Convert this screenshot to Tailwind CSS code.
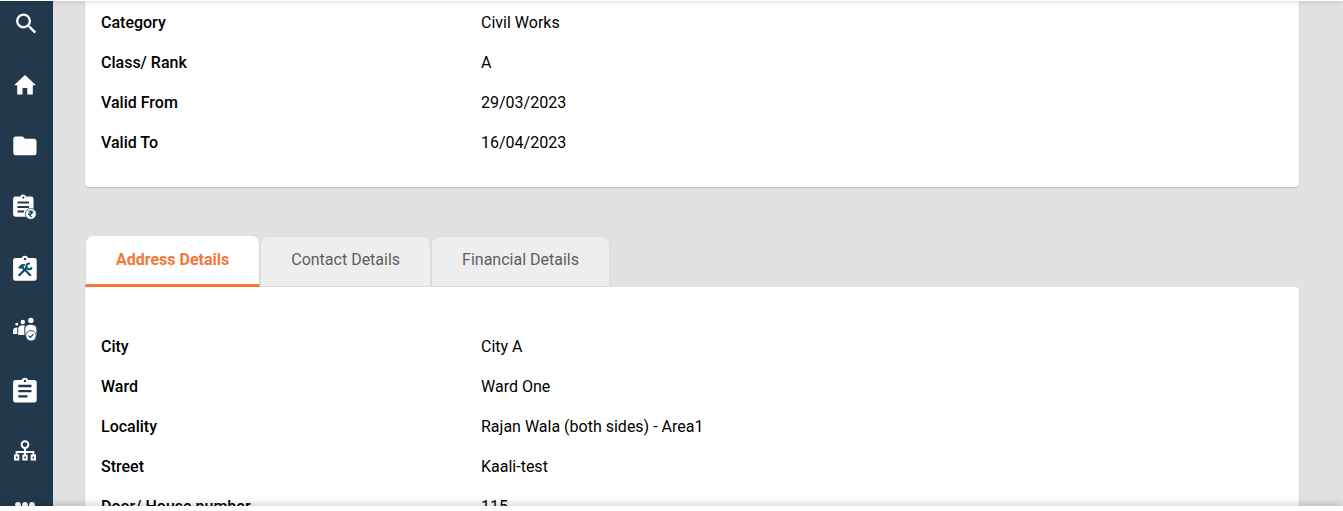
<!DOCTYPE html>
<html lang="en">
<head>
<meta charset="utf-8">
<meta name="viewport" content="width=device-width, initial-scale=1">
<title>Organisation Details</title>
<script src="https://cdn.jsdelivr.net/npm/@tailwindcss/browser@4"></script>
</head>
<body class="flex h-screen flex-col overflow-hidden bg-white font-[Roboto,sans-serif] text-base text-black">
<header class="relative z-10 h-px shrink-0 bg-white shadow-[0_0_5px_rgba(0,0,0,0.5)]"></header>

<div class="flex min-h-0 flex-1 overflow-hidden bg-[#e2e2e2]">
  <nav aria-label="Modules" class="w-[53px] shrink-0 overflow-hidden bg-[#22394d] text-white">
    <ul class="-mt-2">
      <li><a href="#" aria-label="Search" class="flex h-[61px] items-center pl-[13px]">
        <svg class="size-6" viewBox="0 0 24 24" fill="currentColor"><path transform="translate(-.4 -2) scale(1.15)" d="M15.5 14h-.79l-.28-.27A6.47 6.47 0 0 0 16 9.5 6.5 6.5 0 1 0 9.500 16c1.610 0 3.090-.59 4.230-1.570l.27.28v.79l5 4.990L20.490 19l-4.990-5zm-6 0A4.500 4.500 0 1 1 14 9.500 4.490 4.490 0 0 1 9.500 14z"/></svg></a></li>
      <li><a href="#" aria-label="Home" class="flex h-[61px] items-center pl-[13px]">
        <svg class="size-6" viewBox="0 0 24 24" fill="currentColor"><path d="M9.500 21.500V15h4.800v6.500h5.500v-9.200H23L12 2 1 12.300h3.200v9.200z"/></svg></a></li>
      <li><a href="#" aria-label="Projects" class="flex h-[61px] items-center pl-[13px]">
        <svg class="size-6" viewBox="0 0 24 24" fill="currentColor"><path d="M9.600 2.500H2.500A2.400 2.400 0 0 0 .3 4.900v14A2.400 2.400 0 0 0 2.500 21.300h18.800a2.400 2.400 0 0 0 2.200-2.400V7.200a2.400 2.400 0 0 0-2.200-2.400H12z"/></svg></a></li>
      <li><a href="#" aria-label="Estimates" class="flex h-[61px] items-center pl-[13px]">
        <svg class="h-[26px] w-6" viewBox="0 0 24 26"><path fill="currentColor" d="M2.300 2.600H7.200a3.100 3.100 0 0 1 5.800 0h5.300A2.300 2.300 0 0 1 20.500 4.800V20.600a2.300 2.300 0 0 1-2.200 2.200H2.300A2.300 2.300 0 0 1 .1 20.600V4.800A2.300 2.300 0 0 1 2.300 2.600z"/><circle cx="10.300" cy="3.600" r="1.100" fill="#22394d"/><path d="M4.500 8.500h11.500M4.500 13h11.500M4.500 17.500h6.500" stroke="#22394d" stroke-width="2"/><circle cx="17.800" cy="19.800" r="5.500" fill="#fff" stroke="#22394d" stroke-width=".7"/><path d="M15.400 17h5M15.400 18.900h5M16 17c3.600 0 3.600 3.500 0 3.500l2.700 2.700" fill="none" stroke="#0b4b66" stroke-width="1.100"/></svg></a></li>
      <li><a href="#" aria-label="Works" class="flex h-[61px] items-center pl-[13px]">
        <svg class="h-[26px] w-6" viewBox="0 0 24 26"><path fill="currentColor" d="M2.400 3H8.600a3.500 3.500 0 0 1 6.600 0h6.200A2.300 2.300 0 0 1 23.700 5.200v18.300a2.300 2.300 0 0 1-2.300 2.200h-19A2.300 2.300 0 0 1 .1 23.500V5.200A2.300 2.300 0 0 1 2.400 3z"/><circle cx="12" cy="4" r="1.200" fill="#22394d"/><g stroke="#0b4b66" fill="none"><path d="M9 12l8.800 8.800" stroke-width="2.200"/><path d="M5.700 20.800l8.500-8.500" stroke-width="2.200"/><path d="M5.500 12.800l3.200-3.200h3.200L8.300 13.200z" fill="#0b4b66" stroke-width="1"/><path d="M16.800 8.700a2.800 2.800 0 1 0 2 3.600" stroke-width="2"/></g></svg></a></li>
      <li><a href="#" aria-label="Community organisations" class="flex h-[61px] items-center pl-[13px]">
        <svg class="h-[26px] w-6" viewBox="0 0 24 26" fill="currentColor"><circle cx="3.800" cy="8.200" r="1.400"/><circle cx="9.800" cy="6" r="2.200"/><circle cx="17.900" cy="4.400" r="2.700"/><path d="M0 18v-3.300c0-2.200 1.500-3.200 4.300-3.200V18zM5.200 19v-6c0-2.500 1.600-3.700 4.600-3.700 1 0 1.700.2 2.300.5-.6 1-.8 1.700-.8 3V19z"/><path d="M12.300 19.500v-6.700c0-2.800 2-4.100 5.500-4.100s5.600 1.300 5.600 4.100v6.700z"/><circle cx="18" cy="19.800" r="5.200" stroke="#22394d" stroke-width=".8"/><path d="M15.500 19.700l1.800 1.800 3.200-3.300" fill="none" stroke="#22394d" stroke-width="1.200"/></svg></a></li>
      <li><a href="#" aria-label="Contracts" class="flex h-[61px] items-center pl-[13px]">
        <svg class="h-[26px] w-6" viewBox="0 0 24 26"><path fill="currentColor" d="M2.500 3H8.600a3.500 3.500 0 0 1 6.600 0h6.100A2.400 2.400 0 0 1 23.700 5.300v18a2.400 2.400 0 0 1-2.400 2.300H2.500A2.400 2.400 0 0 1 .1 23.300v-18A2.400 2.400 0 0 1 2.500 3z"/><circle cx="12" cy="4" r="1.200" fill="#22394d"/><path d="M5.300 9h13.200M5.300 14.200h13.200M5.300 19.300h9.200" stroke="#22394d" stroke-width="2.300"/></svg></a></li>
      <li><a href="#" aria-label="Organisations" class="flex h-[61px] items-center pl-[13px]">
        <svg class="size-6" viewBox="0 0 24 24" fill="none" stroke="currentColor" stroke-width="1.900"><circle cx="12" cy="5.600" r="3.400"/><path d="M12 9v8M3.600 17v-4h16.800v4"/><path d="M2 16.500h3.400v4H2zM10.300 16.500h3.400v4h-3.400zM18.600 16.500H22v4h-3.400z"/></svg></a></li>
      <li><a href="#" aria-label="Groups" class="flex h-[61px] items-center pl-[13px]">
        <svg class="size-6" viewBox="0 0 24 24" fill="currentColor"><circle cx="5" cy="5" r="2.900"/><circle cx="12" cy="5" r="2.900"/><circle cx="19" cy="5" r="2.900"/><path d="M1 20v-7c0-4 22-4 22 0v7z"/></svg></a></li>
    </ul>
  </nav>

  <main class="min-w-0 flex-1 overflow-hidden pr-11 pl-8">
    <section aria-label="Organisation" class="rounded-b bg-white px-4 pt-[10px] pb-4 shadow-[0_1px_2px_rgba(0,0,0,0.16)]">
      <dl class="grid grid-cols-[380px_1fr]">
        <dt class="mb-4 font-medium">Category</dt><dd class="mb-4">Civil Works</dd>
        <dt class="mb-4 font-medium">Class/ Rank</dt><dd class="mb-4">A</dd>
        <dt class="mb-4 font-medium">Valid From</dt><dd class="mb-4">29/03/2023</dd>
        <dt class="mb-4 font-medium">Valid To</dt><dd class="mb-4">16/04/2023</dd>
      </dl>
    </section>

    <div role="tablist" class="mt-12 flex h-[52px] pt-px">
      <button type="button" role="tab" aria-selected="true" class="rounded-t-lg border-x border-b-3 border-x-[#dcdcdc] border-b-[#f47738] bg-white px-[30px] font-bold text-[#f47738]">Address Details</button>
      <button type="button" role="tab" aria-selected="false" class="rounded-t-lg border border-[#dcdcdc] bg-[#eee] px-[30px] pb-[3px] text-[#5f5c62]">Contact Details</button>
      <button type="button" role="tab" aria-selected="false" class="rounded-t-lg border border-[#dcdcdc] bg-[#eee] px-[30px] pb-[3px] text-[#5f5c62]">Financial Details</button>
    </div>
    <section aria-label="Address Details" class="rounded bg-white px-4 pt-12 pb-4 shadow-[0_1px_2px_rgba(0,0,0,0.16)]">
      <dl class="grid grid-cols-[380px_1fr]">
        <dt class="mb-4 font-medium">City</dt><dd class="mb-4">City A</dd>
        <dt class="mb-4 font-medium">Ward</dt><dd class="mb-4">Ward One</dd>
        <dt class="mb-4 font-medium">Locality</dt><dd class="mb-4">Rajan Wala (both sides) - Area1</dd>
        <dt class="mb-4 font-medium">Street</dt><dd class="mb-4">Kaali-test</dd>
        <dt class="mb-4 font-medium">Door/ House number</dt><dd class="mb-4">115</dd>
      </dl>
    </section>
  </main>
</div>

<footer class="relative z-10 h-[5px] shrink-0 bg-white shadow-[0_0_8px_rgba(0,0,0,0.3)]"></footer>
</body>
</html>
